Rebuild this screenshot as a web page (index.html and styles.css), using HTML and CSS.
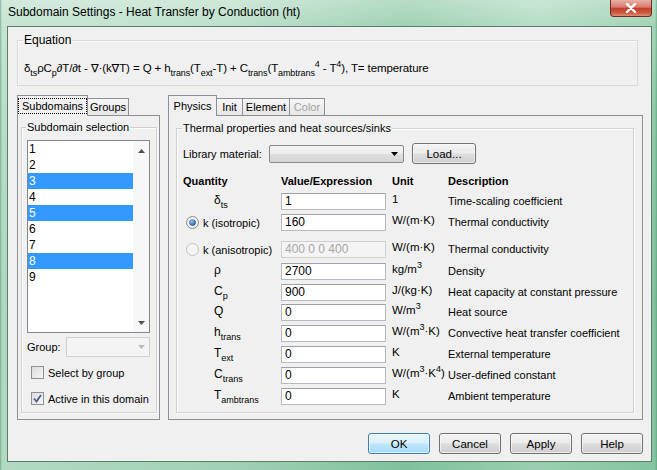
FILE: index.html
```html
<!DOCTYPE html>
<html>
<head>
<meta charset="utf-8">
<link rel="stylesheet" href="styles.css">
</head>
<body>
<div class="frame">
  <div class="titlebar">
    <span class="title">Subdomain Settings - Heat Transfer by Conduction (ht)</span>
    <div class="close"><svg width="14" height="10" viewBox="0 0 14 10"><path d="M3 1 L11 9 M11 1 L3 9" stroke="#fff" stroke-width="2.4" stroke-linecap="round"/></svg></div>
  </div>
  <div class="client">
    <fieldset class="eqbox">
      <legend>Equation</legend>
      <div class="eq">δ<sub>ts</sub>ρC<sub>p</sub>∂T/∂t - ∇·(k∇T) = Q + h<sub>trans</sub>(T<sub>ext</sub>-T) + C<sub>trans</sub>(T<sub>ambtrans</sub><sup>4</sup> - T<sup>4</sup>), T= temperature</div>
    </fieldset>

    <div class="main">
      <div class="tabs tabs-left">
        <div class="tabstrip">
          <div class="tab active w-sub"><span class="focus">Subdomains</span></div>
          <div class="tab w-groups">Groups</div>
        </div>
        <div class="panel">
          <fieldset class="grp grp-left">
            <legend>Subdomain selection</legend>
            <div class="listbox">
              <div class="items">
                <div class="item">1</div>
                <div class="item">2</div>
                <div class="item sel">3</div>
                <div class="item">4</div>
                <div class="item sel">5</div>
                <div class="item">6</div>
                <div class="item">7</div>
                <div class="item sel">8</div>
                <div class="item">9</div>
              </div>
              <div class="vscroll">
                <svg width="7" height="4" viewBox="0 0 7 4"><polygon points="0,4 3.5,0 7,4" fill="#505050"/></svg>
                <svg width="7" height="4" viewBox="0 0 7 4"><polygon points="0,0 3.5,4 7,0" fill="#505050"/></svg>
              </div>
            </div>
            <div class="grouprow">
              <span class="glabel">Group:</span>
              <div class="combo-dis"><svg width="7" height="4" viewBox="0 0 7 4"><polygon points="0,0 3.5,4 7,0" fill="#b8b8b8"/></svg></div>
            </div>
            <div class="check first">
              <span class="cbox"></span><span>Select by group</span>
            </div>
            <div class="check second">
              <span class="cbox"><svg width="11" height="11" viewBox="0 0 11 11"><path d="M2 5.5 L4.5 8.5 L9 2" fill="none" stroke="#4b5f8e" stroke-width="1.8"/></svg></span><span>Active in this domain</span>
            </div>
          </fieldset>
        </div>
      </div>

      <div class="tabs tabs-right">
        <div class="tabstrip">
          <div class="tab active w-phys">Physics</div>
          <div class="tab w-init">Init</div>
          <div class="tab w-elem">Element</div>
          <div class="tab w-color disabled">Color</div>
        </div>
        <div class="panel">
          <fieldset class="grp grp-right">
            <legend>Thermal properties and heat sources/sinks</legend>
            <div class="librow">
              <span class="liblabel">Library material:</span>
              <div class="combo"><svg width="7" height="4" viewBox="0 0 7 4"><polygon points="0,0 3.5,4 7,0" fill="#000"/></svg></div>
              <div class="btn load">Load...</div>
            </div>
            <div class="table">
              <div class="th">Quantity</div>
              <div class="th">Value/Expression</div>
              <div class="th">Unit</div>
              <div class="th">Description</div>

              <div class="q sym"><span>δ<sub>ts</sub></span></div>
              <div class="v"><div class="input">1</div></div>
              <div class="u">1</div>
              <div class="d">Time-scaling coefficient</div>

              <div class="q radio"><svg width="13" height="13" viewBox="0 0 13 13"><defs><radialGradient id="rg" cx="0.4" cy="0.35" r="0.7"><stop offset="0" stop-color="#8fc3ef"/><stop offset="1" stop-color="#1d4f8a"/></radialGradient></defs><circle cx="6.5" cy="6.5" r="6" fill="#f2f2f2" stroke="#8b8b8b"/><circle cx="6.5" cy="6.5" r="3.3" fill="url(#rg)"/></svg><span>k (isotropic)</span></div>
              <div class="v"><div class="input">160</div></div>
              <div class="u">W/(m·K)</div>
              <div class="d">Thermal conductivity</div>

              <div class="q radio"><svg width="13" height="13" viewBox="0 0 13 13"><circle cx="6.5" cy="6.5" r="6" fill="#f4f4f4" stroke="#c2c2c2"/></svg><span>k (anisotropic)</span></div>
              <div class="v"><div class="input dis">400 0 0 400</div></div>
              <div class="u">W/(m·K)</div>
              <div class="d">Thermal conductivity</div>

              <div class="q sym"><span>ρ</span></div>
              <div class="v"><div class="input">2700</div></div>
              <div class="u">kg/m<sup>3</sup></div>
              <div class="d">Density</div>

              <div class="q sym"><span>C<sub>p</sub></span></div>
              <div class="v"><div class="input">900</div></div>
              <div class="u">J/(kg·K)</div>
              <div class="d">Heat capacity at constant pressure</div>

              <div class="q sym"><span>Q</span></div>
              <div class="v"><div class="input">0</div></div>
              <div class="u">W/m<sup>3</sup></div>
              <div class="d">Heat source</div>

              <div class="q sym"><span>h<sub>trans</sub></span></div>
              <div class="v"><div class="input">0</div></div>
              <div class="u">W/(m<sup>3</sup>·K)</div>
              <div class="d">Convective heat transfer coefficient</div>

              <div class="q sym"><span>T<sub>ext</sub></span></div>
              <div class="v"><div class="input">0</div></div>
              <div class="u">K</div>
              <div class="d">External temperature</div>

              <div class="q sym"><span>C<sub>trans</sub></span></div>
              <div class="v"><div class="input">0</div></div>
              <div class="u">W/(m<sup>3</sup>·K<sup>4</sup>)</div>
              <div class="d">User-defined constant</div>

              <div class="q sym"><span>T<sub>ambtrans</sub></span></div>
              <div class="v"><div class="input">0</div></div>
              <div class="u">K</div>
              <div class="d">Ambient temperature</div>
            </div>
          </fieldset>
        </div>
      </div>
    </div>

    <div class="buttons">
      <div class="btn default">OK</div>
      <div class="btn">Cancel</div>
      <div class="btn">Apply</div>
      <div class="btn">Help</div>
    </div>
  </div>
</div>
</body>
</html>
```

FILE: styles.css
```css
html, body {
  margin: 0;
  padding: 0;
}
body {
  width: 657px;
  height: 470px;
  overflow: hidden;
  font-family: "Liberation Sans", "DejaVu Sans", Arial, sans-serif;
  font-size: 11px;
  color: #000;
}
sub {
  font-size: 9px;
  vertical-align: -4px;
  line-height: 0;
}
sup {
  font-size: 9px;
  vertical-align: 5px;
  line-height: 0;
}

.frame {
  height: 470px;
  box-sizing: border-box;
  display: flex;
  flex-direction: column;
  padding: 0 5px 8px 7px;
  background:
    linear-gradient(90deg, rgba(70,140,100,.55) 0, rgba(70,140,100,0) 2px, rgba(70,140,100,0) 655px, rgba(70,140,100,.5) 657px),
    linear-gradient(90deg, rgba(215,236,224,.55) 0%, rgba(210,234,220,.35) 35%, rgba(110,185,142,.25) 62%, rgba(190,228,206,.35) 82%, rgba(130,196,158,.3) 100%),
    linear-gradient(180deg, #cfe8d9 0px, #b3dbc3 24px, #93cbaa 110px, #80c09b 300px, #86c4a0 470px);
}

.titlebar {
  height: 26px;
  display: flex;
  justify-content: space-between;
  align-items: flex-start;
  flex: none;
}
.title {
  font-size: 12px;
  line-height: 14px;
  padding: 5px 0 0 1px;
  color: #000;
}
.close {
  width: 42px;
  height: 17px;
  box-sizing: border-box;
  border: 1px solid #6d2c24;
  border-top: none;
  border-radius: 0 0 4px 4px;
  background: linear-gradient(180deg, #eab0a6 0%, #d8796c 45%, #c1402d 52%, #cf5a40 80%, #e08f73 100%);
  display: flex;
  align-items: center;
  justify-content: center;
}

.client {
  flex: 1;
  background: #f0f0f0;
  border: 1px solid #5d7d6b;
  padding: 7px 8px 0 9px;
  display: flex;
  flex-direction: column;
  min-height: 0;
}

fieldset {
  margin: 0;
  min-width: 0;
}

.eqbox {
  margin: 0 5px 0 0;
  padding: 0 5px 0 5px;
  border: 1px solid #dadada;
  box-shadow: inset 1px 1px 0 #fafafa;
}
.eqbox legend {
  font-size: 12px;
  line-height: 13px;
  padding: 0 1px;
}
.eq {
  font-size: 11.5px;
  line-height: 16px;
  padding: 13px 0 9px 1px;
  white-space: nowrap;
  letter-spacing: -0.1px;
}

.main {
  display: flex;
  gap: 8px;
  margin-top: 9px;
  height: 325px;
  flex: none;
}
.tabs {
  display: flex;
  flex-direction: column;
}
.tabs-left { width: 143px; }
.tabs-right { flex: 1; }

.tabstrip {
  height: 20px;
  display: flex;
  align-items: flex-end;
  flex: none;
}
.tab {
  box-sizing: border-box;
  height: 17px;
  border: 1px solid #8e9097;
  border-bottom: none;
  margin-left: -1px;
  background: linear-gradient(180deg, #f6f6f6 0%, #e6e6e6 100%);
  display: flex;
  align-items: center;
  justify-content: center;
  line-height: 13px;
  padding-top: 1px;
}
.tab.active {
  height: 21px;
  margin-bottom: -1px;
  margin-left: 0;
  background: #f0f0f0;
  position: relative;
  z-index: 1;
  padding-top: 0;
}
.tab.disabled { color: #a3a3a3; }
.w-sub { width: 71px; }
.w-groups { width: 42px; }
.w-phys { width: 49px; }
.w-init { width: 27px; }
.w-elem { width: 48px; }
.w-color { width: 36px; }
.focus {
  outline: 1px dotted #000;
  padding: 1px 3px 0 3px;
  line-height: 13px;
}

.panel {
  flex: 1;
  border: 1px solid #8e9097;
  background: #f0f0f0;
  display: flex;
  flex-direction: column;
  min-height: 0;
}

.grp {
  border: 1px solid #d0d0d0;
  box-shadow: inset 1px 1px 0 #fcfcfc, 1px 1px 0 #fcfcfc;
  flex: 1;
}
.grp legend {
  line-height: 13px;
  padding: 0 1px;
}
.grp-left {
  margin: 5px 2px 6px 3px;
  padding: 0 4px 0 4px;
}
.grp-right {
  margin: 6px 8px 6px 7px;
  padding: 0 5px 5px 5px;
}

/* list box */
.listbox {
  margin: 6px 0 0 1px;
  width: 123px;
  height: 193px;
  box-sizing: border-box;
  border: 1px solid #828790;
  background: #fff;
  display: flex;
}
.items {
  flex: 1;
}
.item {
  height: 16px;
  line-height: 16px;
  padding-left: 1px;
  font-size: 12px;
}
.item.sel {
  background: #3399ff;
  color: #fff;
}
.vscroll {
  width: 16px;
  background: #f7f7f7;
  display: flex;
  flex-direction: column;
  align-items: center;
  justify-content: space-between;
  padding: 8px 0 7px;
}

.grouprow {
  display: flex;
  align-items: center;
  margin: 4px 0 0 1px;
  height: 20px;
}
.glabel {
  width: 39px;
}
.combo-dis {
  width: 84px;
  height: 20px;
  box-sizing: border-box;
  border: 1px solid #cfcfcf;
  background: #f4f4f4;
  display: flex;
  align-items: center;
  justify-content: flex-end;
  padding-right: 4px;
}

.check {
  display: flex;
  align-items: center;
  height: 13px;
  padding-left: 5px;
  gap: 4px;
}
.check.first { margin-top: 9px; }
.check.second { margin-top: 13px; }
.cbox {
  width: 13px;
  height: 13px;
  box-sizing: border-box;
  border: 1px solid #8e8f8f;
  background: linear-gradient(135deg, #dcdcdc 0%, #f6f6f6 100%);
  display: flex;
  align-items: center;
  justify-content: center;
}

/* right panel */
.librow {
  display: flex;
  align-items: center;
  height: 21px;
  margin: 8px 0 0 1px;
}
.liblabel {
  width: 86px;
}
.combo {
  width: 135px;
  height: 18px;
  box-sizing: border-box;
  border: 1px solid #8a8a8a;
  border-radius: 2px;
  background: linear-gradient(180deg, #f4f4f4 0%, #ececec 50%, #dfdfdf 51%, #d4d4d4 100%);
  display: flex;
  align-items: center;
  justify-content: flex-end;
  padding-right: 5px;
}
.btn {
  box-sizing: border-box;
  border: 1px solid #707070;
  border-radius: 3px;
  background: linear-gradient(180deg, #f3f3f3 0%, #ebebeb 48%, #dddddd 52%, #cfcfcf 100%);
  box-shadow: inset 0 0 0 1px rgba(255,255,255,.6);
  display: flex;
  align-items: center;
  justify-content: center;
  font-size: 11.5px;
}
.load {
  width: 64px;
  height: 21px;
  margin-left: 8px;
}

.table {
  display: grid;
  grid-template-columns: 98px 111px 56px 1fr;
  grid-template-rows: 17px 21px 27px 22px 21px 20px 21px 21px 21px 21px 21px;
  margin: 10px 0 0 1px;
  align-items: start;
}
.th {
  font-weight: bold;
  line-height: 14px;
}
.q {
  margin-top: 2px;
  height: 17px;
  display: flex;
  align-items: center;
  white-space: nowrap;
}
.q.sym {
  padding-left: 31px;
  font-size: 12px;
}
.q.sym span {
  line-height: 14px;
  margin-top: -4px;
}
.q.radio {
  padding-left: 3px;
  gap: 4px;
}
.input {
  margin-top: 2px;
  width: 105px;
  height: 17px;
  box-sizing: border-box;
  border: 1px solid #b6b9c0;
  border-top-color: #9ea1a8;
  background: #fff;
  line-height: 15px;
  padding-left: 3px;
  font-size: 12px;
}
.input.dis {
  background: #f4f4f4;
  color: #a6a6a6;
  border-color: #cfcfcf;
}
.u {
  padding-top: 1px;
  line-height: 14px;
  white-space: nowrap;
  font-size: 11.5px;
}
.d {
  margin-top: 3px;
  line-height: 15px;
  white-space: nowrap;
}

.buttons {
  display: flex;
  justify-content: flex-end;
  gap: 9px;
  margin-top: 13px;
}
.buttons .btn {
  width: 62px;
  height: 21px;
}
.btn.default {
  border-color: #3c7fb1;
  background: linear-gradient(180deg, #eaf6fd 0%, #d9f0fc 48%, #bee6fd 52%, #a7d9f5 100%);
}
```
